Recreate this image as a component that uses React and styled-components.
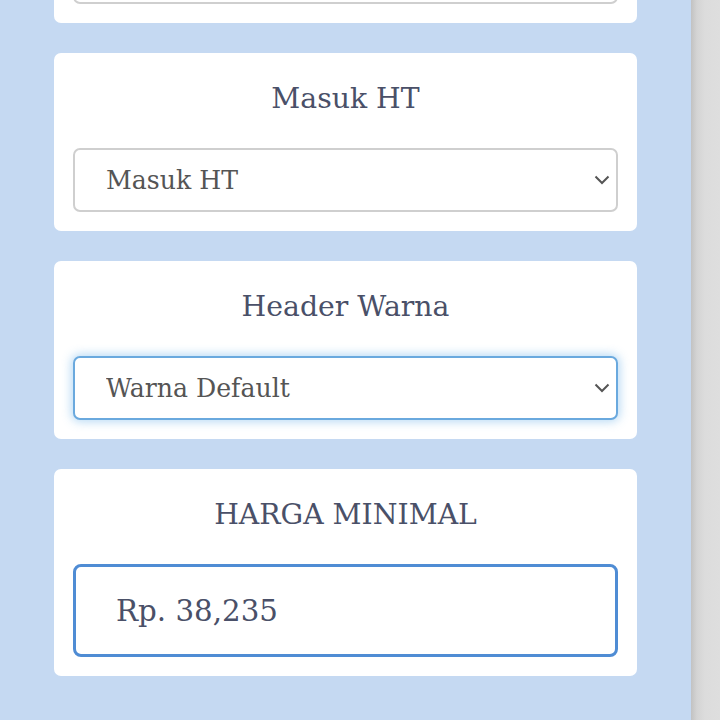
import React from "react";
import styled, { createGlobalStyle } from "styled-components";

const Global = createGlobalStyle`
  html, body {
    margin: 0;
    padding: 0;
    height: 720px;
    overflow: hidden;
    background: #c5d9f2;
  }
  * { box-sizing: border-box; }
`;

const Page = styled.div`
  display: flex;
  width: 720px;
  height: 720px;
  overflow: hidden;
  font-family: "DejaVu Serif", "Liberation Serif", serif;
`;

const Main = styled.div`
  width: 691px;
  background: #c5d9f2;
  padding: 0 54px;
`;

// halaman sudah discroll sedikit, kartu pertama terpotong di atas
const Column = styled.div`
  display: flex;
  flex-direction: column;
  gap: 30px;
  margin-top: -155px;
`;

const Edge = styled.div`
  flex: 1;
  background: linear-gradient(to right, #c2c2c2 0px, #d4d4d4 6px, #dcdcdc 14px, #dedede 100%);
`;

const Card = styled.div`
  background: #ffffff;
  border-radius: 7px;
  padding: 23px 19px 19px;
  display: flex;
  flex-direction: column;
`;

const Title = styled.div`
  text-align: center;
  font-size: 28.3px;
  line-height: 45px;
  color: #4a5068;
  margin-bottom: 27px;
`;

const SelectWrap = styled.div`
  position: relative;
`;

const Select = styled.select`
  appearance: none;
  width: 100%;
  height: 64px;
  padding: 0 40px 0 31px;
  font-family: inherit;
  font-size: 25.2px;
  color: #555555;
  background: #ffffff;
  border: 2px solid ${(p) => (p.focused ? "#6aa9de" : "#cfcfcf")};
  border-radius: 7px;
  box-shadow: ${(p) =>
    p.focused ? "0 0 10px 2px rgba(102, 175, 233, 0.45)" : "none"};
  outline: none;
`;

const Chevron = styled.svg`
  position: absolute;
  right: 8px;
  top: 50%;
  transform: translateY(-50%);
  pointer-events: none;
`;

const PriceInput = styled.input`
  width: 100%;
  height: 93px;
  padding: 0 40px;
  font-family: inherit;
  font-size: 29.3px;
  color: #4a5068;
  border: 3px solid #4f8cd4;
  border-radius: 8px;
  outline: none;
`;

function Dropdown({ value, focused }) {
  return (
    <SelectWrap>
      <Select focused={focused} defaultValue={value}>
        <option>{value}</option>
      </Select>
      <Chevron width="16" height="10" viewBox="0 0 16 10">
        <polyline
          points="1.5,1.5 8,8 14.5,1.5"
          fill="none"
          stroke="#555"
          strokeWidth="2"
        />
      </Chevron>
    </SelectWrap>
  );
}

export default function App() {
  return (
    <Page>
      <Global />
      <Main>
        <Column>
          <Card>
            <Title>Jenis Tampilan</Title>
            <Dropdown value="Default" />
          </Card>
          <Card>
            <Title>Masuk HT</Title>
            <Dropdown value="Masuk HT" />
          </Card>
          <Card>
            <Title>Header Warna</Title>
            <Dropdown value="Warna Default" focused />
          </Card>
          <Card>
            <Title>HARGA MINIMAL</Title>
            <PriceInput defaultValue="Rp. 38,235" />
          </Card>
        </Column>
      </Main>
      <Edge />
    </Page>
  );
}
